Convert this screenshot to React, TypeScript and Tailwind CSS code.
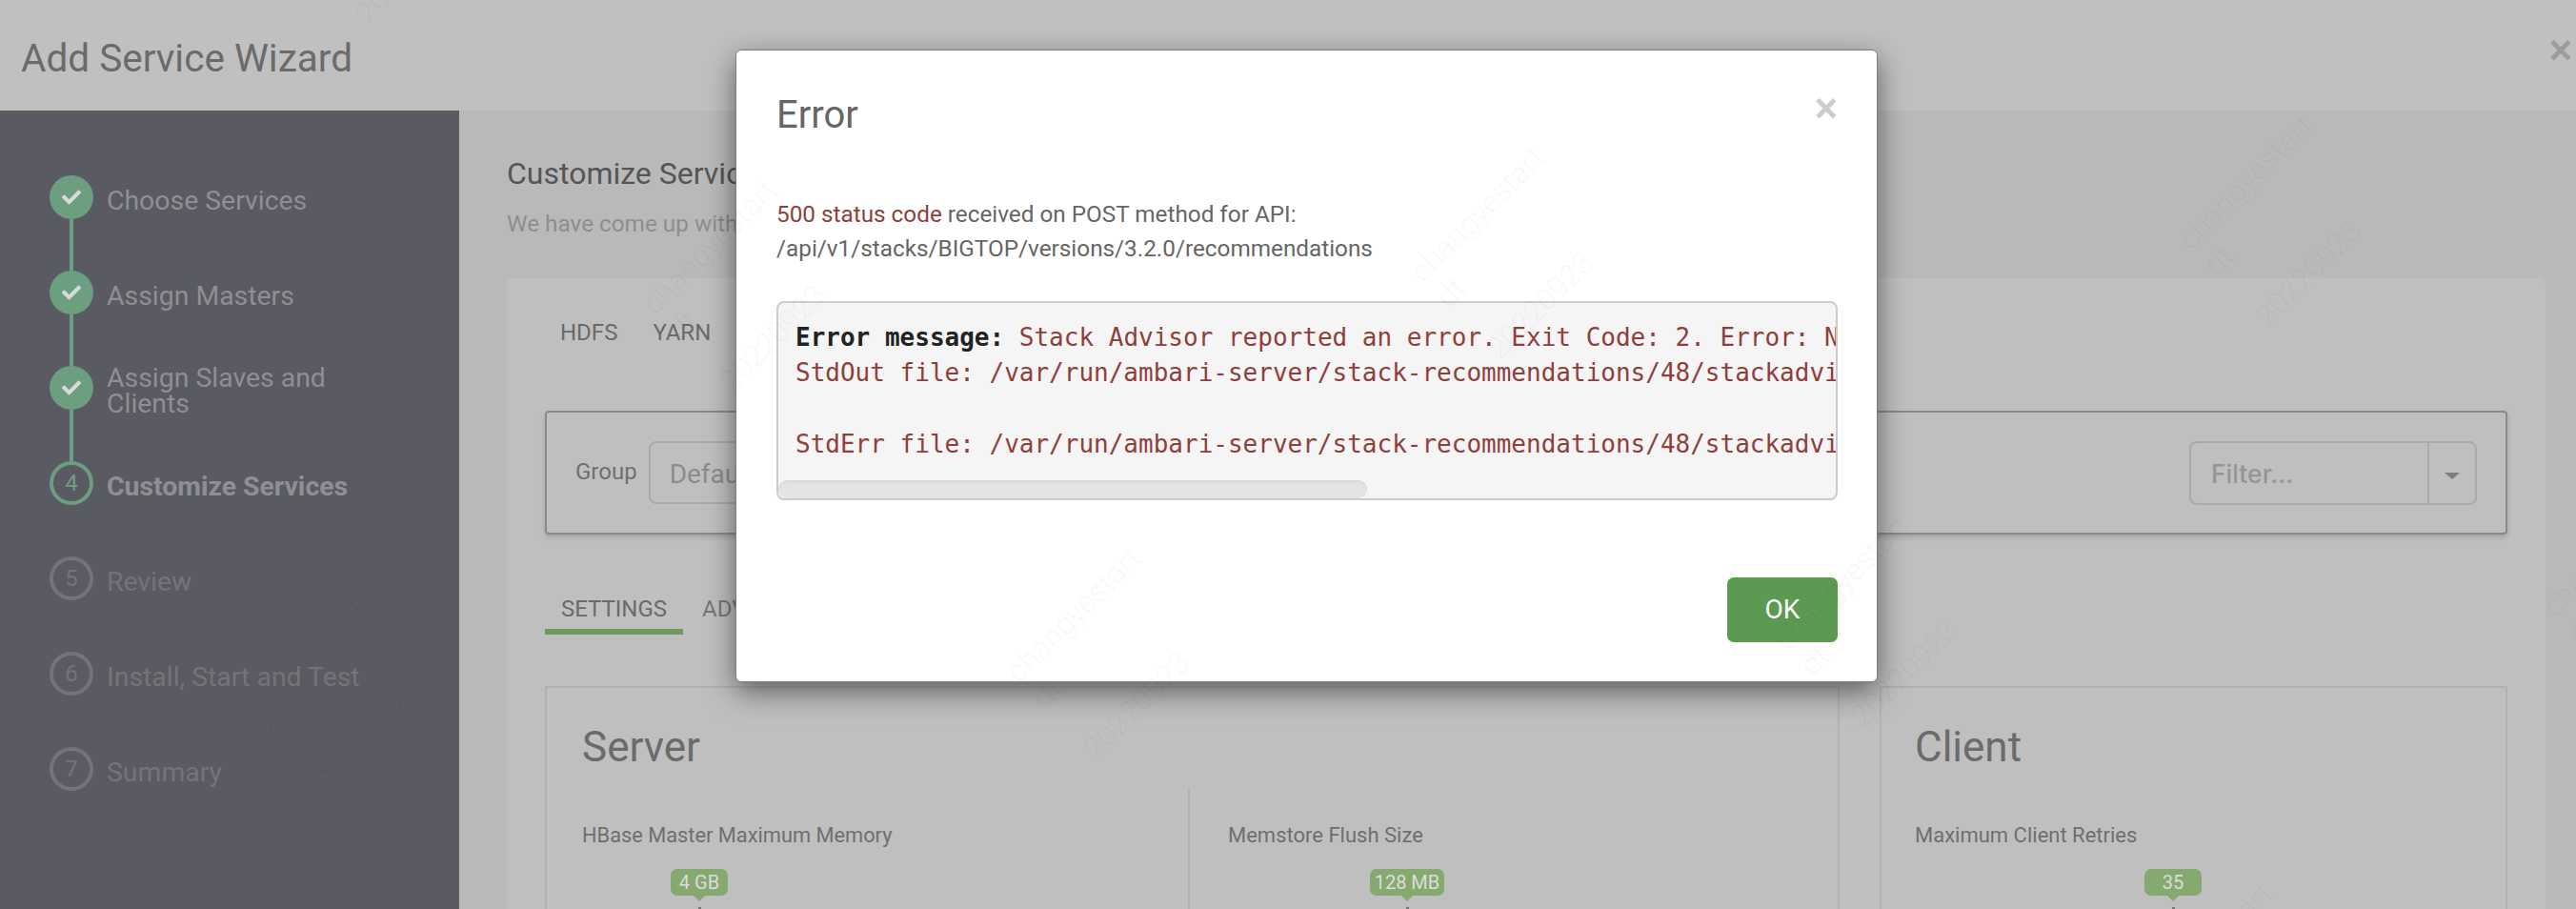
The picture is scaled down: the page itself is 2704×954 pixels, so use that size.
import { FaCheck } from "react-icons/fa";

type Step = { label: string; state: "done" | "current" | "todo" };

const steps: Step[] = [
  { label: "Choose Services", state: "done" },
  { label: "Assign Masters", state: "done" },
  { label: "Assign Slaves and Clients", state: "done" },
  { label: "Customize Services", state: "current" },
  { label: "Review", state: "todo" },
  { label: "Install, Start and Test", state: "todo" },
  { label: "Summary", state: "todo" },
];

// centres of the "changyestart" line, the watermark repeats on a skewed lattice
const marks = [
  [368, -132],
  [-56, 288],
  [750, 254],
  [1556, 220],
  [2362, 186],
  [326, 674],
  [1132, 640],
  [1938, 606],
  [2744, 572],
  [708, 1060],
  [1514, 1026],
  [2320, 992],
];

function Sidebar() {
  return (
    <aside className="w-[482px] shrink-0 bg-[#5a5a62] pl-[52px] pt-[68px]">
      {steps.map((s, i) => (
        <div key={s.label} className="flex h-[100px]">
          <div className="flex w-[46px] flex-col items-center">
            {s.state === "done" && (
              <div className="flex h-[46px] w-[46px] shrink-0 items-center justify-center rounded-full bg-[#6b9f80] text-[#d9d9d9]">
                <FaCheck size={20} />
              </div>
            )}
            {s.state === "current" && (
              <div className="flex h-[46px] w-[46px] shrink-0 items-center justify-center rounded-full border-4 border-[#6b9f80] text-[24px] text-[#6b9f80]">
                {i + 1}
              </div>
            )}
            {s.state === "todo" && (
              <div className="flex h-[46px] w-[46px] shrink-0 items-center justify-center rounded-full border-4 border-[#747478] text-[24px] text-[#747478]">
                {i + 1}
              </div>
            )}
            {i < 3 && <div className="w-1 flex-1 bg-[#6b9f80]" />}
          </div>
          <div
            className={
              "ml-[14px] flex h-[46px] w-[300px] items-center pt-[6px] text-[28.4px] leading-[27px] " +
              (s.state === "current"
                ? "font-bold text-[#8f8f93]"
                : s.state === "done"
                  ? "text-[#8f8f93]"
                  : "text-[#747478]")
            }
          >
            {s.label}
          </div>
        </div>
      ))}
    </aside>
  );
}

function Bubble({ text, width, ml }: { text: string; width: string; ml: string }) {
  return (
    <div className={"mt-[17px] flex flex-col items-center " + width + " " + ml}>
      <div className="flex h-[28px] w-full items-center justify-center rounded-[7px] bg-[#86a96f] text-[20px] text-[#dcdcdc]">
        {text}
      </div>
      <div className="h-0 w-0 border-x-[6px] border-t-[6px] border-x-transparent border-t-[#86a96f]" />
      <div className="mt-[6px] h-[2px] w-[3px] bg-[#777]" />
    </div>
  );
}

function MainPanel() {
  return (
    <main className="min-w-0 flex-1 bg-[#b9b9b9] pl-[50px] pr-[32px] pt-[46px]">
      <h2 className="text-[32px] font-normal leading-[40px] text-[#555555]">Customize Services</h2>
      <p className="mt-[15px] text-[24.3px] leading-[36px] text-[#8e8e8e]">We have come up with</p>

      <div className="mt-[39px] h-[700px] rounded-t-[6px] bg-[#bfbfbf] px-[40px] pt-[39px]">
        <div className="flex gap-[37px] pl-[16px] text-[24px] leading-[36px] text-[#6a6a6a]">
          <span>HDFS</span>
          <span>YARN</span>
        </div>

        <div className="mt-[64px] flex h-[130px] items-center rounded-[4px] border-2 border-[#8a8a8a] pl-[30px] pr-[30px] shadow-[0_3px_5px_rgba(0,0,0,0.15)]">
          <span className="pb-[2px] text-[24px] text-[#6f6f6f]">Group</span>
          <div className="ml-[12px] flex h-[66px] w-[400px] items-center rounded-l-[8px] border-2 border-[#aaaaaa] pl-[20px] pt-[4px] text-[28px] text-[#8c8c8c]">
            Default
          </div>
          <div className="ml-auto flex h-[67px] w-[302px] rounded-[8px] border-2 border-[#aaaaaa] font-['Inter',sans-serif] text-[26.5px] font-medium text-[#959595]">
            <div className="flex w-[250px] items-center border-r-2 border-[#aaaaaa] pl-[21px] pt-[4px]">Filter...</div>
            <div className="flex flex-1 items-center justify-center pt-[6px]">
              <div className="h-0 w-0 border-x-[8px] border-t-[7px] border-x-transparent border-t-[#7d7d7d]" />
            </div>
          </div>
        </div>

        <div className="mt-[60px] flex text-[24px] text-[#6a6a6a]">
          <div className="flex h-[45px] w-[145px] items-start justify-center border-b-[6px] border-[#6f9a5f] leading-[36px]">
            SETTINGS
          </div>
          <div className="ml-[20px] leading-[36px] text-[#777777]">ADVANCED</div>
        </div>

        <div className="mt-[54px] flex gap-[42px]">
          <section className="flex h-[400px] w-[1359px] border-2 border-[#b1b1b1] pl-[37px]">
            <div className="w-[636px] pt-[33px]">
              <h3 className="text-[44px] font-normal leading-[58px] text-[#6b6b6b]">Server</h3>
              <div className="mt-[46px] text-[21.8px] leading-[36px] text-[#6f6f6f]">HBase Master Maximum Memory</div>
              <Bubble text="4 GB" width="w-[60px]" ml="ml-[93px]" />
            </div>
            <div className="mt-[105px] w-[2px] bg-[#b1b1b1]" />
            <div className="flex-1 pl-[40px] pt-[137px]">
              <div className="text-[22px] leading-[36px] text-[#6f6f6f]">Memstore Flush Size</div>
              <Bubble text="128 MB" width="w-[78px]" ml="ml-[149px]" />
            </div>
          </section>
          <section className="h-[400px] flex-1 border-2 border-[#b1b1b1] pl-[35px] pt-[33px]">
            <h3 className="text-[44px] font-normal leading-[58px] text-[#6b6b6b]">Client</h3>
            <div className="mt-[46px] text-[22px] leading-[36px] text-[#6f6f6f]">Maximum Client Retries</div>
            <Bubble text="35" width="w-[60px]" ml="ml-[241px]" />
          </section>
        </div>
      </div>
    </main>
  );
}

function ErrorModal() {
  return (
    <div className="absolute left-[772px] top-[52px] flex h-[664px] w-[1199px] flex-col rounded-[6px] border border-[#7d7d7d] bg-white pl-[42px] pr-[41px] shadow-[0_10px_30px_rgba(0,0,0,0.5)]">
      <div className="flex items-start justify-between pt-[40px]">
        <h4 className="text-[40px] font-normal leading-[56px] text-[#666666]">Error</h4>
        <span className="mt-[-9px] font-['Liberation_Sans',sans-serif] text-[42px] font-bold leading-[60px] text-[#cccccc]">
          ×
        </span>
      </div>
      <div className="mt-[58px] text-[24.3px] leading-[36px] text-[#666666]">
        <span className="text-[#8f3f3c]">500 status code</span> received on POST method for API:
        <br />
        /api/v1/stacks/BIGTOP/versions/3.2.0/recommendations
      </div>
      <div className="relative mt-[37px] h-[209px] overflow-hidden rounded-[8px] border-2 border-[#cccccc] bg-[#f5f5f5] p-[18px] font-['DejaVu_Sans_Mono',monospace] text-[26px] leading-[37.3px] text-[#8f3f3c]">
        <pre className="font-['DejaVu_Sans_Mono',monospace]">
          <b className="text-[#222222]">Error message:</b> Stack Advisor reported an error. Exit Code: 2. Error: N
          {"\n"}StdOut file: /var/run/ambari-server/stack-recommendations/48/stackadvi
          {"\n\n"}StdErr file: /var/run/ambari-server/stack-recommendations/48/stackadvi
        </pre>
        <div className="absolute bottom-0 left-0 h-[19px] w-[618px] rounded-[10px] bg-[#e4e4e4] shadow-[inset_0_2px_3px_rgba(0,0,0,0.06)]" />
      </div>
      <div className="mt-[81px] flex justify-end">
        <button className="h-[68px] w-[116px] rounded-[7px] bg-[#5b9a50] text-[28px] text-white">OK</button>
      </div>
    </div>
  );
}

export default function App() {
  return (
    <div className="relative flex h-[954px] w-[2704px] flex-col overflow-hidden font-['Roboto',sans-serif]">
      <header className="flex h-[116px] shrink-0 items-center justify-between bg-[#c0c0c0] pl-[22px] pr-[4px]">
        <h1 className="pt-[6px] text-[40.5px] font-normal text-[#6b6b6b]">Add Service Wizard</h1>
        <span className="mt-[-12px] font-['Liberation_Sans',sans-serif] text-[42px] font-bold text-[#9c9c9c]">×</span>
      </header>
      <div className="flex min-h-0 flex-1">
        <Sidebar />
        <MainPanel />
      </div>

      <ErrorModal />

      {marks.map(([x, y]) => (
        <div
          key={x + "," + y}
          className="pointer-events-none absolute w-[200px] origin-[99px_19px] -rotate-45 text-[32px] font-light leading-[38px] text-black/[0.04]"
          style={{ left: x - 99, top: y - 19 }}
        >
          <div>changyestart</div>
          <div>dt</div>
          <div className="mt-[38px]">20220923</div>
        </div>
      ))}
    </div>
  );
}
